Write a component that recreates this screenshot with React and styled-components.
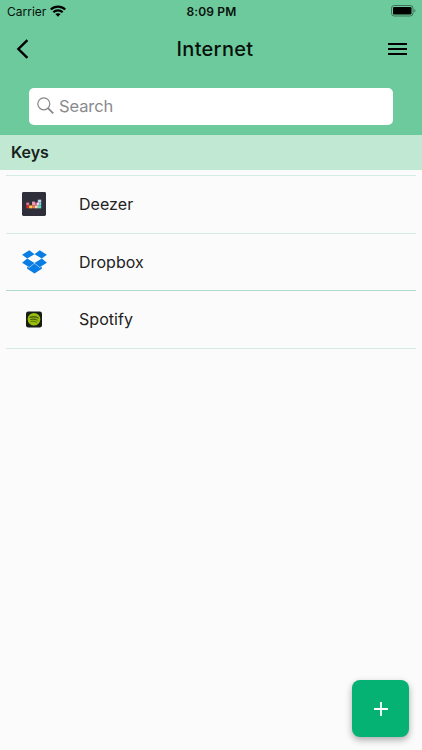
import React from "react";
import styled, { createGlobalStyle } from "styled-components";

const GlobalStyle = createGlobalStyle`
  * {
    box-sizing: border-box;
  }

  body {
    margin: 0;
    background: #fbfbfb;
    font-family: Inter, "Liberation Sans", sans-serif;
    color: #222;
  }
`;

const Screen = styled.div`
  position: relative;
  display: flex;
  flex-direction: column;
  height: 750px;
  overflow: hidden;
`;

const Header = styled.header`
  display: flex;
  flex-direction: column;
  height: 134.5px;
  background: #6dca9c;
  color: #07110c;
`;

const StatusBar = styled.div`
  display: grid;
  grid-template-columns: 1fr auto 1fr;
  align-items: center;
  height: 22px;
  padding: 0 6px 0 7px;
`;

const Carrier = styled.div`
  display: flex;
  align-items: center;
  gap: 4px;
  font-size: 12px;
  letter-spacing: 0;
`;

const Time = styled.div`
  font-size: 12px;
  font-weight: 600;
  letter-spacing: 0.15px;
`;

const BatteryIcon = styled.svg`
  justify-self: end;
`;

const NavBar = styled.div`
  display: grid;
  grid-template-columns: 60px 1fr 60px;
  align-items: center;
  height: 54px;
`;

const IconButton = styled.button`
  display: flex;
  justify-content: ${(props) => (props.$end ? "flex-end" : "flex-start")};
  padding: ${(props) => (props.$end ? "0 15px 0 0" : "0 0 0 16px")};
  border: 0;
  background: none;
  color: inherit;
`;

const Title = styled.h1`
  margin: 0 0 0 8px;
  font-size: 20px;
  font-weight: 500;
  line-height: 24px;
  letter-spacing: 0.3px;
  text-align: center;
`;

const SearchBox = styled.label`
  display: flex;
  align-items: center;
  gap: 5px;
  height: 37px;
  margin: 12px 29px 0;
  padding: 0 8px 2px;
  border-radius: 5px;
  background: #fff;
`;

const SearchInput = styled.input`
  flex: 1;
  min-width: 0;
  padding: 0;
  border: 0;
  outline: 0;
  background: none;
  font-family: inherit;
  font-size: 16.5px;
  letter-spacing: -0.1px;

  &::placeholder {
    color: #8a8a8d;
    opacity: 1;
  }
`;

const SectionTitle = styled.h2`
  height: 35.5px;
  margin: 0;
  padding-left: 11px;
  background: #c1e8d2;
  font-size: 16px;
  font-weight: 600;
  line-height: 35px;
  letter-spacing: -0.05px;
  color: #17221c;
`;

const List = styled.ul`
  margin: 5px 6px 0;
  padding: 0;
  border-top: 1px solid #d5eae2;
  list-style: none;
`;

const Row = styled.li`
  display: flex;
  align-items: center;
  height: 57.5px;
  border-bottom: 1px solid ${(props) => (props.$strong ? "#b1dbc9" : "#d5eae2")};
`;

const RowIcon = styled.div`
  display: flex;
  justify-content: center;
  width: 56px;
  margin-right: 17px;
`;

const RowLabel = styled.span`
  font-size: 16px;
  line-height: 20px;
  letter-spacing: 0.05px;
`;

const AddButton = styled.button`
  position: absolute;
  right: 13px;
  bottom: 13px;
  display: flex;
  align-items: center;
  justify-content: center;
  width: 57px;
  height: 57px;
  padding: 0 0 0 1px;
  border: 0;
  border-radius: 8px;
  background: #06b273;
  box-shadow: 0 3px 7px rgba(0, 0, 0, 0.32);
`;

function DeezerLogo() {
  return (
    <svg width="24" height="24" viewBox="0 0 25 25">
      <rect width="25" height="25" rx="1.5" fill="#2e2f3a" />
      <rect x="4.5" y="11" width="3" height="3" fill="#eb7184" />
      <rect x="4.5" y="14" width="3" height="3" fill="#e51e2d" />
      <rect x="7.5" y="14" width="3" height="3" fill="#ffd04b" />
      <rect x="10.5" y="10" width="3" height="4" fill="#f0a0ad" />
      <rect x="10.5" y="14" width="3" height="3" fill="#f37b58" />
      <rect x="13.5" y="11" width="3" height="3" fill="#df5794" />
      <rect x="13.5" y="14" width="3" height="3" fill="#f5dda5" />
      <rect x="16.5" y="8" width="3.5" height="3" fill="#b9d8e4" />
      <rect x="15.5" y="11" width="2.5" height="3" fill="#eadcec" />
      <rect x="18" y="11" width="2" height="3" fill="#7dd3e6" />
      <rect x="16.5" y="14" width="3.5" height="3" fill="#66d8ca" />
    </svg>
  );
}

function DropboxLogo() {
  return (
    <svg width="25" height="24" viewBox="0 0 25 24" fill="#087ee5">
      <path d="M7.3 0.3 12.5 4.3 5.2 8.6 0.1 4.7Z" />
      <path d="M17.7 0.3 12.5 4.3 19.8 8.6 24.9 4.7Z" />
      <path d="M5.2 8.6 0.1 12.8 7.3 17.2 12.5 13Z" />
      <path d="M19.8 8.6 24.9 12.8 17.7 17.2 12.5 13Z" />
      <path d="M12.5 13.5 7.3 17.7 5.2 16.5V18.7L12.5 23.6 19.8 18.7V16.5L17.7 17.7Z" />
    </svg>
  );
}

function SpotifyLogo() {
  return (
    <svg width="16" height="17" viewBox="0 0 17 17">
      <rect width="17" height="17" rx="2.5" fill="#181c16" />
      <circle cx="8.5" cy="8.2" r="6.7" fill="#98bd0b" />
      <g fill="none" stroke="#4a6010" strokeLinecap="round">
        <path d="M4.4 6.2C7.2 5.3 10.5 5.6 12.8 6.9" strokeWidth="1.4" />
        <path d="M4.9 8.5C7.4 7.8 9.9 8.1 11.9 9.2" strokeWidth="1.1" />
        <path d="M5.4 10.6C7.4 10.1 9.4 10.4 11 11.3" strokeWidth="0.9" />
      </g>
    </svg>
  );
}

const keys = [
  { name: "Deezer", Logo: DeezerLogo },
  { name: "Dropbox", Logo: DropboxLogo, strong: true },
  { name: "Spotify", Logo: SpotifyLogo },
];

function App() {
  return (
    <Screen>
      <GlobalStyle />

      <Header>
        <StatusBar>
          <Carrier>
            Carrier
            <svg width="16" height="12" viewBox="0 0 15 11" fill="none">
              <g stroke="#000" strokeWidth="2.1">
                <path d="M0.7 4.1C4.6 0.4 10.4 0.4 14.3 4.1" />
                <path d="M3.1 6.7C5.6 4.4 9.4 4.4 11.9 6.7" />
              </g>
              <path d="M5 8.4C6.5 7.2 8.5 7.2 10 8.4L7.5 11Z" fill="#000" />
            </svg>
          </Carrier>
          <Time>8:09 PM</Time>
          <BatteryIcon width="25" height="12" viewBox="0 0 25 12">
            <rect
              x="0.5"
              y="0.5"
              width="21.5"
              height="10.5"
              rx="2.8"
              fill="none"
              stroke="#3c7057"
            />
            <rect x="2" y="2" width="18.5" height="7.5" rx="1.3" />
            <path d="M23.4 4C24.8 4.5 24.8 7 23.4 7.5Z" fill="#3c7057" />
          </BatteryIcon>
        </StatusBar>

        <NavBar>
          <IconButton aria-label="Back">
            <svg width="13" height="20" viewBox="0 0 13 20">
              <path
                d="M11.4 1.1 2.4 10 11.4 18.9"
                fill="none"
                stroke="#000"
                strokeWidth="2.4"
              />
            </svg>
          </IconButton>
          <Title>Internet</Title>
          <IconButton $end aria-label="Menu">
            <svg width="19" height="12" viewBox="0 0 19 12">
              <path d="M0 0H19V2H0ZM0 5H19V7H0ZM0 10H19V12H0Z" />
            </svg>
          </IconButton>
        </NavBar>

        <SearchBox>
          <svg width="17" height="18" viewBox="0 0 17 18">
            <g fill="none" stroke="#858588">
              <circle cx="6.8" cy="6.8" r="6" strokeWidth="1.2" />
              <path d="M11 11.2 16.2 16.4" strokeWidth="1.7" />
            </g>
          </svg>
          <SearchInput placeholder="Search" />
        </SearchBox>
      </Header>

      <SectionTitle>Keys</SectionTitle>

      <List>
        {keys.map(({ name, Logo, strong }) => (
          <Row key={name} $strong={strong}>
            <RowIcon>
              <Logo />
            </RowIcon>
            <RowLabel>{name}</RowLabel>
          </Row>
        ))}
      </List>

      <AddButton aria-label="Add key">
        <svg width="14" height="14" viewBox="0 0 14 14">
          <path d="M7 0V14M0 7H14" stroke="#fff" strokeWidth="1.8" />
        </svg>
      </AddButton>
    </Screen>
  );
}

export default App;
